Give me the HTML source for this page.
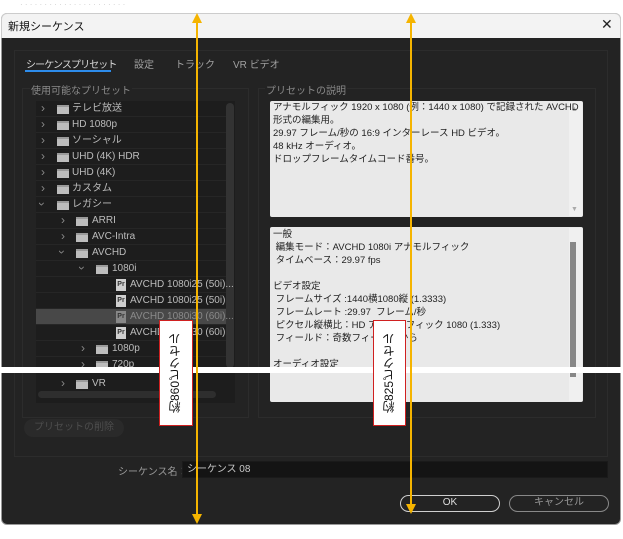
<!DOCTYPE html>
<html><head><meta charset="utf-8"><style>
*{margin:0;padding:0;box-sizing:border-box}
body{width:623px;height:539px;background:#fff;position:relative;overflow:hidden;font-family:"Liberation Sans","Noto Sans CJK JP",sans-serif;font-size:10px}
.a{position:absolute;white-space:nowrap}
.row{position:absolute;left:36px;width:190px;height:16px;border-bottom:1px solid #262626;color:#bcbcbc;font-size:10px;line-height:15px;white-space:nowrap}
.chev{position:absolute;top:0;color:#8a8a8a;font-size:12px;line-height:14px}
.fold{position:absolute;top:4px;width:12px;height:9px;background:#bdbdbd;border-top:2px solid #9a9a9a}
.pr{position:absolute;top:2px;width:10px;height:12px;background:#cfcfcf;color:#333;font-size:7px;line-height:12px;text-align:center;font-weight:bold}
.txt{position:absolute;top:0;white-space:nowrap}
.d{position:absolute;left:273px;color:#222;font-size:9.5px;line-height:13px;white-space:nowrap}
</style></head><body>
<div class="a" style="left:20px;top:0;color:#ccc;font-size:8px">· ·  ·   · · · · ·  · · · ·   · · · ·  · · · · · ·</div>
<div class="a" style="left:1px;top:13px;width:620px;height:512px;background:#232323;border:1px solid #999;border-radius:6px;overflow:hidden"></div>
<div class="a" style="left:1px;top:13px;width:620px;height:25px;background:#f3f3f3;border-radius:6px 6px 0 0;border:1px solid #ccc;border-bottom:none"></div>
<div class="a" style="left:8px;top:18px;font-size:11px;color:#111">新規シーケンス</div>
<div class="a" style="left:601px;top:16px;font-size:14px;color:#222">✕</div>
<div class="a" style="left:14px;top:50px;width:594px;height:407px;border:1px solid #2c2c2c"></div>
<div class="a" style="left:26px;top:56px;color:#d8d8d8;font-size:10px;letter-spacing:-0.9px">シーケンスプリセット</div>
<div class="a" style="left:25px;top:70px;width:86px;height:2px;background:#2d8ceb"></div>
<div class="a" style="left:134px;top:56px;color:#a0a0a0">設定</div>
<div class="a" style="left:175px;top:56px;color:#a0a0a0">トラック</div>
<div class="a" style="left:233px;top:56px;color:#a0a0a0">VR ビデオ</div>
<div class="a" style="left:22px;top:88px;width:227px;height:330px;border:1px solid #2c2c2c"></div>
<div class="a" style="left:30px;top:82px;color:#8a8a8a;background:#232323;padding:0 1px">使用可能なプリセット</div>
<div class="a" style="left:36px;top:101px;width:199px;height:302px;background:#1d1d1d"></div>
<div class="a" style="left:226px;top:103px;width:8px;height:265px;background:#333;border-radius:4px"></div>

<div class="row" style="top:101px"><span class="chev" style="left:5px">›</span><span class="fold" style="left:21px"></span><span class="txt" style="left:36px">テレビ放送</span></div>
<div class="row" style="top:117px"><span class="chev" style="left:5px">›</span><span class="fold" style="left:21px"></span><span class="txt" style="left:36px">HD 1080p</span></div>
<div class="row" style="top:133px"><span class="chev" style="left:5px">›</span><span class="fold" style="left:21px"></span><span class="txt" style="left:36px">ソーシャル</span></div>
<div class="row" style="top:149px"><span class="chev" style="left:5px">›</span><span class="fold" style="left:21px"></span><span class="txt" style="left:36px">UHD (4K) HDR</span></div>
<div class="row" style="top:165px"><span class="chev" style="left:5px">›</span><span class="fold" style="left:21px"></span><span class="txt" style="left:36px">UHD (4K)</span></div>
<div class="row" style="top:181px"><span class="chev" style="left:5px">›</span><span class="fold" style="left:21px"></span><span class="txt" style="left:36px">カスタム</span></div>
<div class="row" style="top:197px"><span class="chev" style="left:4px;transform:rotate(90deg)">›</span><span class="fold" style="left:21px"></span><span class="txt" style="left:36px">レガシー</span></div>
<div class="row" style="top:213px"><span class="chev" style="left:25px">›</span><span class="fold" style="left:40px"></span><span class="txt" style="left:56px">ARRI</span></div>
<div class="row" style="top:229px"><span class="chev" style="left:25px">›</span><span class="fold" style="left:40px"></span><span class="txt" style="left:56px">AVC-Intra</span></div>
<div class="row" style="top:245px"><span class="chev" style="left:24px;transform:rotate(90deg)">›</span><span class="fold" style="left:40px"></span><span class="txt" style="left:56px">AVCHD</span></div>
<div class="row" style="top:261px"><span class="chev" style="left:44px;transform:rotate(90deg)">›</span><span class="fold" style="left:60px"></span><span class="txt" style="left:76px">1080i</span></div>
<div class="row" style="top:277px"><span class="pr" style="left:80px">Pr</span><span class="txt" style="left:94px">AVCHD 1080i25 (50i)...</span></div>
<div class="row" style="top:293px"><span class="pr" style="left:80px">Pr</span><span class="txt" style="left:94px">AVCHD 1080i25 (50i)</span></div>
<div class="row" style="top:309px;background:#484848;color:#8a8a8a"><span class="pr" style="left:80px;background:#888">Pr</span><span class="txt" style="left:94px">AVCHD 1080i30 (60i)...</span></div>
<div class="row" style="top:325px"><span class="pr" style="left:80px">Pr</span><span class="txt" style="left:94px">AVCHD 1080i30 (60i)</span></div>
<div class="row" style="top:341px"><span class="chev" style="left:45px">›</span><span class="fold" style="left:60px"></span><span class="txt" style="left:76px">1080p</span></div>
<div class="row" style="top:357px"><span class="chev" style="left:45px">›</span><span class="fold" style="left:60px"></span><span class="txt" style="left:76px">720p</span></div>
<div class="row" style="top:376px;border:none"><span class="chev" style="left:25px">›</span><span class="fold" style="left:40px"></span><span class="txt" style="left:56px">VR</span></div>
<div class="a" style="left:38px;top:391px;width:178px;height:7px;background:#2e2e2e;border-radius:4px"></div>

<div class="a" style="left:258px;top:88px;width:338px;height:330px;border:1px solid #2c2c2c"></div>
<div class="a" style="left:265px;top:82px;color:#8a8a8a;background:#232323;padding:0 1px">プリセットの説明</div>
<div class="a" style="left:270px;top:101px;width:313px;height:116px;background:#e9e9e9;border-radius:2px"></div>
<div class="a" style="left:569px;top:102px;width:13px;height:114px;background:#f0f0f0"></div>
<div class="a" style="left:571px;top:106px;color:#aaa;font-size:7px">▲</div>
<div class="a" style="left:571px;top:206px;color:#aaa;font-size:7px">▼</div>
<div class="d" style="top:101px">アナモルフィック 1920 x 1080 (例：1440 x 1080) で記録された AVCHD<br>形式の編集用。<br>29.97 フレーム/秒の 16:9 インターレース HD ビデオ。<br>48 kHz オーディオ。<br>ドロップフレームタイムコード番号。</div>
<div class="a" style="left:270px;top:227px;width:313px;height:175px;background:#e9e9e9;border-radius:2px"></div>
<div class="a" style="left:569px;top:228px;width:13px;height:173px;background:#f0f0f0"></div>
<div class="a" style="left:570px;top:242px;width:6px;height:135px;background:#888"></div>
<div class="d" style="top:228px">一般<br>&nbsp;編集モード：AVCHD 1080i アナモルフィック<br>&nbsp;タイムベース：29.97 fps<br><br>ビデオ設定<br>&nbsp;フレームサイズ :1440横1080縦 (1.3333)<br>&nbsp;フレームレート :29.97 &nbsp;フレーム/秒<br>&nbsp;ピクセル縦横比：HD アナモルフィック 1080 (1.333)<br>&nbsp;フィールド：奇数フィールドから<br><br>オーディオ設定</div>

<div class="a" style="left:0;top:367px;width:623px;height:6px;background:#fff"></div>

<div class="a" style="left:24px;top:419px;width:100px;height:18px;background:#2a2a2a;border-radius:9px;color:#4e4e4e;text-align:center;line-height:18px">プリセットの削除</div>
<div class="a" style="left:118px;top:463px;color:#9a9a9a">シーケンス名：</div>
<div class="a" style="left:182px;top:461px;width:426px;height:17px;background:#141414;border:1px solid #1a1a1a;color:#c8c8c8;padding-left:4px;line-height:15px">シーケンス 08</div>
<div class="a" style="left:400px;top:495px;width:100px;height:17px;border:1.5px solid #cfcfcf;border-radius:9px;color:#ddd;text-align:center;line-height:14px">OK</div>
<div class="a" style="left:509px;top:495px;width:100px;height:17px;border:1.5px solid #888;border-radius:9px;color:#999;text-align:center;line-height:14px">キャンセル</div>

<div class="a" style="left:196px;top:20px;width:2px;height:500px;background:#f5b400"></div>
<div class="a" style="left:192px;top:13px;width:0;height:0;border-left:5px solid transparent;border-right:5px solid transparent;border-bottom:10px solid #f5b400"></div>
<div class="a" style="left:192px;top:514px;width:0;height:0;border-left:5px solid transparent;border-right:5px solid transparent;border-top:10px solid #f5b400"></div>
<div class="a" style="left:410px;top:20px;width:2px;height:492px;background:#f5b400"></div>
<div class="a" style="left:406px;top:13px;width:0;height:0;border-left:5px solid transparent;border-right:5px solid transparent;border-bottom:10px solid #f5b400"></div>
<div class="a" style="left:406px;top:504px;width:0;height:0;border-left:5px solid transparent;border-right:5px solid transparent;border-top:10px solid #f5b400"></div>
<div class="a" style="left:159px;top:320px;width:34px;height:106px;background:#fff;border:1.5px solid #d02020;writing-mode:vertical-rl;transform:rotate(180deg);font-size:12px;color:#111;line-height:30px;text-align:center">約860ピクセル</div>
<div class="a" style="left:373px;top:320px;width:33px;height:106px;background:#fff;border:1.5px solid #d02020;writing-mode:vertical-rl;transform:rotate(180deg);font-size:12px;color:#111;line-height:30px;text-align:center">約825ピクセル</div>
</body></html>
